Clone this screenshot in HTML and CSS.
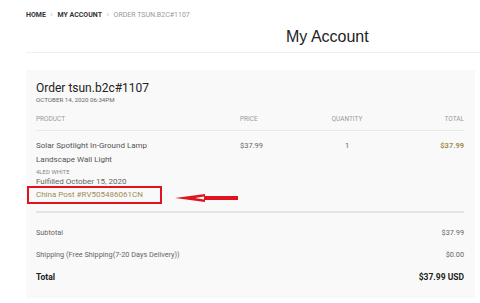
FILE: index.html
```
<!DOCTYPE html>
<html lang="en">
    <head>
        <meta charset="UTF-8">
        <meta name="viewport" content="width=device-width, initial-scale=1.0">
        <title>My Account</title>
        <link rel="stylesheet" href="styles.css">
    </head>
    <body>
        <nav class="breadcrumb">
            <a href="#">Home</a>
            <span class="sep">&rsaquo;</span>
            <a href="#">My Account</a>
            <span class="sep">&rsaquo;</span>
            <span class="current">Order tsun.b2c#1107</span>
        </nav>

        <h1 class="page-title">My Account</h1>

        <div class="order">
            <h2>Order tsun.b2c#1107</h2>
            <p class="date">October 14, 2020 06:34PM</p>

            <table class="items">
                <thead>
                    <tr>
                        <th class="col-product">Product</th>
                        <th class="col-price">Price</th>
                        <th class="col-qty">Quantity</th>
                        <th class="col-total">Total</th>
                    </tr>
                </thead>
                <tbody>
                    <tr>
                        <td class="col-product">
                            <div class="name">Solar Spotlight In-Ground Lamp<br>Landscape Wall Light</div>
                            <div class="variant">4LED White</div>
                            <div class="fulfilled">Fulfilled October 15, 2020</div>
                            <div class="tracking">
                                <a href="#" class="marked">China Post #RV505486061CN</a>
                                <svg class="arrow" width="63" height="10" viewBox="0 0 63 10">
                                    <path d="M0 5 L30 1 L30 3 L63 3 L63 7 L30 7 L30 9 Z" fill="#e0141e"/>
                                    <path d="M20 5 L29 3.4 L29 6.6 Z" fill="#fff"/>
                                </svg>
                            </div>
                        </td>
                        <td class="col-price">$37.99</td>
                        <td class="col-qty">1</td>
                        <td class="col-total gold">$37.99</td>
                    </tr>
                </tbody>
            </table>

            <table class="summary">
                <tr>
                    <td>Subtotal</td>
                    <td class="amount">$37.99</td>
                </tr>
                <tr>
                    <td>Shipping (Free Shipping(7-20 Days Delivery))</td>
                    <td class="amount">$0.00</td>
                </tr>
                <tr class="grand">
                    <td>Total</td>
                    <td class="amount">$37.99 USD</td>
                </tr>
            </table>
        </div>
    </body>
</html>
```

FILE: styles.css
```
body {
    margin: 0;
    padding: 0;
    font-family: Roboto, "Liberation Sans", Arial, sans-serif;
    color: #444;
    background-color: #fff;
}
a {
    color: inherit;
    text-decoration: none;
}
.breadcrumb {
    padding: 11px 0 0 26px;
    height: 10px;
    font-size: 7px;
    line-height: 8px;
    text-transform: uppercase;
}
.breadcrumb a {
    font-weight: bold;
    color: #333;
}
.breadcrumb .sep {
    color: #aaa;
    margin: 0 3px;
}
.breadcrumb .current {
    color: #999;
}
.page-title {
    margin: 0 0 0 26px;
    padding: 6px 0 0 260px;
    height: 25px;
    border-bottom: 1px solid #efefef;
    font-family: "Liberation Sans", Arial, sans-serif;
    font-size: 16px;
    font-weight: normal;
    line-height: 20px;
    color: #222;
}
.order {
    margin: 17px 5px 0 26px;
    padding: 10px 11px 10px 10px;
    background-color: #f9f9f9;
}
.order h2 {
    margin: 0;
    font-size: 12px;
    font-weight: normal;
    line-height: 16px;
    color: #222;
}
.date {
    margin: 0 0 10px;
    font-size: 6.2px;
    line-height: 9px;
    text-transform: uppercase;
    color: #666;
}
table {
    width: 100%;
    border-collapse: collapse;
}
.items {
    table-layout: fixed;
}
.items th {
    padding: 0 0 7px;
    font-size: 6.5px;
    line-height: 8px;
    font-weight: normal;
    text-transform: uppercase;
    color: #999;
    border-bottom: 1px solid #e8e8e8;
}
.items td {
    padding: 8px 0 8px;
    vertical-align: top;
    font-size: 7.5px;
    line-height: 14px;
    color: #666;
    border-bottom: 2px solid #e4e4e4;
}
.col-product {
    width: 204px;
    text-align: left;
}
.col-price {
    width: 80px;
    text-align: left;
}
.col-qty {
    width: 54px;
    text-align: center;
}
.col-total {
    text-align: right;
}
.items td.gold {
    color: #a28f52;
    font-weight: bold;
}
.items .name {
    font-size: 8px;
    color: #555;
}
.items .variant {
    font-size: 6px;
    line-height: 10px;
    text-transform: uppercase;
    color: #888;
}
.items .fulfilled {
    font-size: 8px;
    line-height: 10px;
    color: #666;
}
.tracking {
    position: relative;
    font-size: 8px;
    line-height: 16px;
}
.marked {
    position: relative;
    display: inline-block;
    color: #a08c58;
}
.marked::before {
    content: "";
    position: absolute;
    left: -9px;
    right: -19px;
    top: -1px;
    bottom: -1px;
    border: 2px solid #e0141e;
}
.arrow {
    position: absolute;
    left: 139px;
    top: 6px;
}
.summary {
    margin-top: 9px;
}
.summary td {
    padding: 0;
    font-size: 7.3px;
    line-height: 22px;
    color: #666;
}
.summary .amount {
    text-align: right;
}
.summary .grand td {
    font-size: 8.5px;
    font-weight: bold;
    color: #222;
}
```
